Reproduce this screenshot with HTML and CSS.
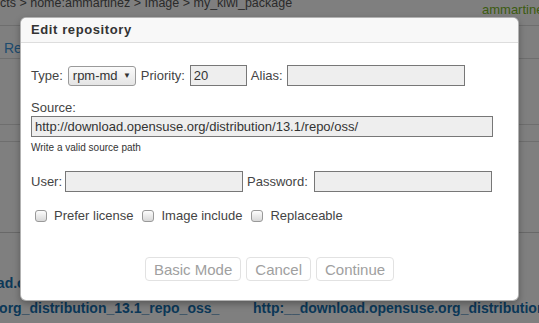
FILE: index.html
```html
<!DOCTYPE html>
<html lang="en">
<head>
    <meta charset="UTF-8">
    <title>Edit repository</title>
    <link rel="stylesheet" href="styles.css">
</head>
<body>
    <div class="page">
        <div class="topbar">
            <div class="crumbs">cts &gt; home:ammartinez &gt; Image &gt; my_kiwi_package</div>
            <div class="user">ammartinez</div>
        </div>
        <div class="tabs"><span class="tab">Repositories</span></div>
        <div class="panel-head"></div>
        <div class="panel-sub"></div>
        <div class="panel-body"></div>
        <div class="link-row first"><a class="link" href="#">http://download.opensuse.org/distribution/13.1/repo/oss/</a></div>
        <div class="link-row second">
            <a class="link" href="#">http:__download.opensuse.org_distribution_13.1_repo_oss_</a>
            <a class="link" href="#">http:__download.opensuse.org_distribution_13.1_repo_oss_</a>
        </div>

        <div class="overlay"></div>

        <div class="modal">
            <div class="modal-header">Edit repository</div>
            <div class="modal-body">
                <div class="row">
                    <label>Type:</label>
                    <span class="select">
                        <select><option>rpm-md</option></select>
                    </span>
                    <label>Priority:</label>
                    <input type="text" class="priority" value="20">
                    <label class="alias">Alias:</label>
                    <input type="text" class="wide">
                </div>

                <label class="block">Source:</label>
                <input type="text" class="source" value="http://download.opensuse.org/distribution/13.1/repo/oss/">
                <p class="help">Write a valid source path</p>

                <div class="row user-row">
                    <label>User:</label>
                    <input type="text" class="wide">
                    <label class="pass">Password:</label>
                    <input type="password" class="wide">
                </div>

                <div class="checks">
                    <label class="check"><input type="checkbox"> Prefer license</label>
                    <label class="check"><input type="checkbox"> Image include</label>
                    <label class="check"><input type="checkbox"> Replaceable</label>
                </div>
            </div>
            <div class="modal-footer">
                <button disabled>Basic Mode</button>
                <button disabled>Cancel</button>
                <button disabled>Continue</button>
            </div>
        </div>
    </div>
</body>
</html>
```

FILE: styles.css
```css
body {
    margin: 0;
    font-family: 'Liberation Sans', Arial, sans-serif;
    background-color: #fff;
}

.page {
    position: relative;
    width: 539px;
    height: 323px;
    overflow: hidden;
}

.topbar {
    display: grid;
    grid-template-columns: 482px 1fr;
    height: 25px;
    white-space: nowrap;
}

.crumbs {
    font-size: 12.5px;
    color: #555;
    line-height: 14px;
    margin-top: -4px;
}

.user {
    font-size: 13px;
    color: #78b81e;
    line-height: 16px;
    margin-top: 2px;
}

.tabs {
    height: 32px;
    border-top: 1px solid #dcdcdc;
    border-bottom: 1px solid #dcdcdc;
}

.tab {
    display: inline-block;
    margin: 14px 0 0 4px;
    font-size: 14px;
    color: #3c96dc;
}

.panel-head {
    height: 65px;
    border-bottom: 1px solid #dcdcdc;
}

.panel-sub {
    height: 16px;
    border-bottom: 1px solid #dcdcdc;
}

.panel-body {
    height: 90px;
    border-bottom: 1px solid #d0d0d0;
}

.link-row {
    display: flex;
    white-space: nowrap;
}

.link-row.first {
    margin-top: 42px;
}

.link-row.first .link {
    margin-left: -91px;
}

.link-row.second {
    margin-top: 8px;
}

.link-row.second .link:first-child {
    margin-left: -186px;
    width: 439px;
    flex: none;
    overflow: hidden;
}

.link {
    font-size: 14px;
    font-weight: bold;
    color: #1670b0;
    text-decoration: none;
    line-height: 17px;
}

.overlay {
    position: absolute;
    top: 0;
    left: 0;
    right: 0;
    bottom: 0;
    background-color: rgba(0, 0, 0, 0.5);
}

.modal {
    position: absolute;
    top: 17px;
    left: 20px;
    width: 499px;
    box-sizing: border-box;
    background-color: #fff;
    border: 1px solid rgba(0, 0, 0, 0.3);
    border-radius: 6px;
    box-shadow: 0 3px 7px rgba(0, 0, 0, 0.3);
    color: #444;
    font-size: 13px;
}

.modal-header {
    height: 24px;
    line-height: 24px;
    padding-left: 10px;
    background-color: #f8f8f8;
    border-bottom: 1px solid #ddd;
    border-radius: 6px 6px 0 0;
    font-weight: bold;
    letter-spacing: 0.6px;
    color: #333;
}

.modal-body {
    padding: 22px 10px 0;
}

.row {
    display: flex;
    align-items: center;
    gap: 5px;
    height: 21px;
}

.row .alias {
    margin-left: -1px;
}

.row .alias + input {
    margin-left: -1px;
}

.user-row {
    gap: 3px;
}

.row .pass {
    margin-left: 1px;
    margin-right: 3px;
}

input[type=text],
input[type=password] {
    box-sizing: border-box;
    height: 21px;
    margin: 0;
    padding: 0 3px;
    border: 1px solid #777;
    background-color: #eee;
    font-family: inherit;
    font-size: 13px;
    color: #333;
}

.priority {
    width: 57px;
}

.wide {
    width: 178px;
}

.select {
    position: relative;
    display: inline-block;
}

.select select {
    appearance: none;
    -webkit-appearance: none;
    box-sizing: border-box;
    width: 68px;
    height: 20px;
    margin: 0;
    padding: 0 0 0 4px;
    border: 1px solid #9a9a9a;
    border-radius: 3px;
    background: linear-gradient(#fbfbfb, #e4e4e4);
    font-family: inherit;
    font-size: 13px;
    color: #333;
}

.select::after {
    content: "\25BC";
    position: absolute;
    right: 5px;
    top: 5px;
    font-size: 8px;
    color: #333;
    pointer-events: none;
}

.block {
    display: block;
    margin-top: 14px;
    line-height: 16px;
}

.source {
    display: block;
    width: 462px;
    height: 20px;
    margin-top: 2px;
}

.help {
    margin: 5px 0 0;
    font-size: 10px;
    line-height: 12px;
    color: #333;
}

.help + .row {
    margin-top: 17px;
}

.checks {
    display: flex;
    align-items: center;
    margin-top: 17px;
    padding-left: 4px;
    height: 13px;
}

.check {
    display: flex;
    align-items: center;
    margin-right: 9px;
}

.check input {
    appearance: none;
    -webkit-appearance: none;
    width: 12px;
    height: 12px;
    margin: 0 7px 0 0;
    border: 1px solid #999;
    border-radius: 3px;
    background: linear-gradient(#fdfdfd, #d8d8d8);
}

.modal-footer {
    display: flex;
    justify-content: center;
    gap: 5px;
    padding: 35px 0 19px;
}

.modal-footer button {
    height: 24px;
    padding: 0 8px;
    border: 1px solid #e2e2e2;
    border-radius: 4px;
    background-color: #fff;
    font-family: inherit;
    font-size: 15px;
    color: #a0a0a0;
}
```
